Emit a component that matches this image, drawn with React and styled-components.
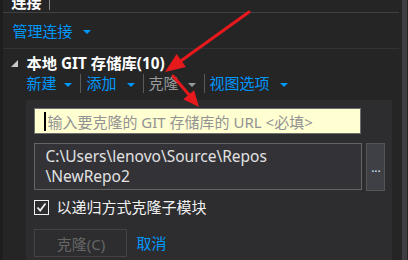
import React from 'react';
import styled, { createGlobalStyle } from 'styled-components';

const GlobalStyle = createGlobalStyle`
  body {
    margin: 0;
    background: #252526;
    font-family: "Noto Sans", "Noto Sans CJK SC", sans-serif;
  }
`;

const Frame = styled.div`
  position: relative;
  display: flex;
  width: 408px;
  height: 260px;
  overflow: hidden;
  background: #252526;
`;

const LeftStrip = styled.div`
  width: 6px;
  background: #1e1e1e;
`;

const Main = styled.div`
  flex: 1;
  display: flex;
  flex-direction: column;
`;

const ScrollTrack = styled.div`
  width: 13px;
  display: flex;
  justify-content: flex-end;
  padding-right: 1px;
  background: #252526;
`;

const ScrollBar = styled.div`
  width: 5px;
  background: #3e3e42;
`;

const TopBar = styled.div`
  height: 12px;
  border-bottom: 1px solid #3f3f46;
  overflow: hidden;
  display: flex;
  align-items: flex-end;
  padding-left: 8px;
  gap: 8px;
`;

const TopTitle = styled.span`
  color: #ffffff;
  font-weight: 700;
  font-size: 15px;
  line-height: 20px;
  margin-bottom: 0px;
`;

const TopPipe = styled.span`
  width: 1px;
  height: 10px;
  background: #8a8a8a;
  align-self: flex-start;
`;

const LinkRow = styled.div`
  height: 35px;
  border-bottom: 1px solid #333337;
  display: flex;
  align-items: center;
  padding-left: 9px;
`;

const Link = styled.span`
  color: ${p => (p.$muted ? '#9a9a9a' : '#0097fb')};
  font-size: 15px;
  line-height: 20px;
  display: inline-flex;
  align-items: center;
  cursor: pointer;
`;

const Caret = styled.span`
  display: inline-block;
  width: 0;
  height: 0;
  margin-left: ${p => p.$gap || 8}px;
  border-left: 4px solid transparent;
  border-right: 4px solid transparent;
  border-top: 4px solid ${p => (p.$muted ? '#9a9a9a' : '#0097fb')};
  margin-top: 3px;
`;

const SectionHead = styled.div`
  display: flex;
  align-items: center;
  height: 20px;
  margin-top: 4px;
  padding-left: 8px;
`;

const Expander = styled.span`
  width: 0;
  height: 0;
  border-left: 7px solid transparent;
  border-bottom: 7px solid #c8c8c8;
  margin-right: 8px;
  margin-top: 1px;
`;

const SectionTitle = styled.span`
  color: #ffffff;
  font-weight: 700;
  font-size: 15.3px;
  line-height: 20px;
`;

const Toolbar = styled.div`
  display: flex;
  align-items: center;
  height: 20px;
  padding-left: 23px;
`;

const Divider = styled.span`
  width: 1px;
  height: 19px;
  background: #5a5a5a;
  margin: 0 5px 0 8px;
`;

const Panel = styled.div`
  margin: 7px 7px 0 23px;
  flex: 1;
  background: #2d2d30;
  padding: 8px 7px 0 8px;
  display: grid;
  grid-template-columns: 327px 19px;
  column-gap: 5px;
  align-content: start;
`;

const UrlInput = styled.div`
  grid-column: 1;
  height: 24px;
  background: #ffffd2;
  border: 1px solid #6e6e6e;
  display: flex;
  align-items: center;
  padding-left: 9px;
  color: #939393;
  font-size: 15px;
  white-space: nowrap;
  overflow: hidden;
`;

const TextCaret = styled.span`
  width: 2px;
  height: 19px;
  background: #000;
  margin-right: 1px;
`;

const PathBox = styled.div`
  grid-column: 1;
  margin-top: 9px;
  height: 43px;
  background: #333337;
  border: 1px solid #646464;
  padding: 2px 0 0 10px;
  color: #e2e2e2;
  font-size: 15.5px;
  line-height: 20px;
  box-sizing: content-box;
  width: 316px;
`;

const BrowseButton = styled.div`
  grid-column: 2;
  margin-top: 9px;
  height: 45px;
  background: #3f3f46;
  border: 1px solid #555558;
  display: flex;
  align-items: center;
  justify-content: center;
  padding-top: 1px;
  color: #d8e8f4;
  font-size: 12px;
`;

const CheckRow = styled.label`
  grid-column: 1 / 3;
  margin-top: 7px;
  display: flex;
  align-items: center;
  gap: 7px;
  color: #f1f1f1;
  font-size: 15px;
  line-height: 18px;
`;

const Box = styled.span`
  width: 13px;
  height: 13px;
  border: 1px solid #f1f1f1;
  display: flex;
  align-items: center;
  justify-content: center;
`;

const Actions = styled.div`
  grid-column: 1 / 3;
  margin-top: 13px;
  display: flex;
  align-items: center;
  gap: 9px;
`;

const CloneButton = styled.div`
  width: 91px;
  height: 26px;
  border: 1px solid #434346;
  display: flex;
  align-items: center;
  justify-content: center;
  color: #656565;
  font-size: 15px;
`;

const Overlay = styled.svg`
  position: absolute;
  left: 0;
  top: 0;
  pointer-events: none;
`;

export default function App() {
  return (
    <>
      <GlobalStyle />
      <Frame>
        <LeftStrip />
        <Main>
          <TopBar>
            <TopTitle>连接</TopTitle>
            <TopPipe />
          </TopBar>
          <LinkRow>
            <Link>管理连接<Caret $gap={11} /></Link>
          </LinkRow>
          <SectionHead>
            <Expander />
            <SectionTitle>本地 GIT 存储库(10)</SectionTitle>
          </SectionHead>
          <Toolbar>
            <Link>新建<Caret /></Link>
            <Divider />
            <Link>添加<Caret $gap={10} /></Link>
            <Divider />
            <Link $muted>克隆<Caret $muted $gap={9} /></Link>
            <Divider />
            <Link>视图选项<Caret $gap={10} /></Link>
          </Toolbar>
          <Panel>
            <UrlInput>
              <TextCaret />
              输入要克隆的 GIT 存储库的 URL &lt;必填&gt;
            </UrlInput>
            <PathBox>
              C:\Users\lenovo\Source\Repos
              <br />
              \NewRepo2
            </PathBox>
            <BrowseButton>...</BrowseButton>
            <CheckRow>
              <Box>
                <svg width="11" height="11" viewBox="0 0 11 11">
                  <path d="M1.5 5.5 L4.2 8.5 L9.5 1.5" fill="none" stroke="#f1f1f1" strokeWidth="1.8" />
                </svg>
              </Box>
              以递归方式克隆子模块
            </CheckRow>
            <Actions>
              <CloneButton>克隆(C)</CloneButton>
              <Link>取消</Link>
            </Actions>
          </Panel>
        </Main>
        <ScrollTrack>
          <ScrollBar />
        </ScrollTrack>
        <Overlay width="408" height="260" viewBox="0 0 408 260">
          <g stroke="#e8191c" strokeWidth="3" fill="#e8191c" strokeLinecap="round">
            <line x1="249" y1="12" x2="178" y2="63" />
            <polygon points="165,72 185.9,66.9 176.6,53.9" stroke="none" />
            <line x1="173" y1="76" x2="190" y2="96" />
            <polygon points="199,107 194.1,90.2 183.3,99.2" stroke="none" />
          </g>
        </Overlay>
      </Frame>
    </>
  );
}
